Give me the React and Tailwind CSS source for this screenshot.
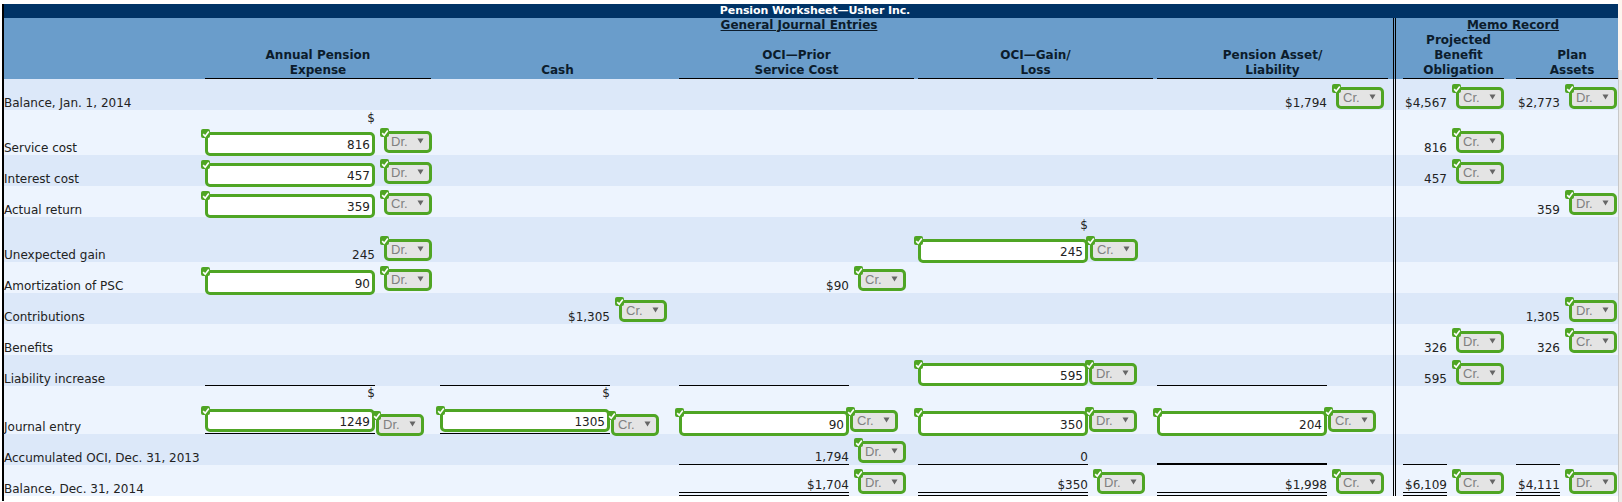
import React from "react";

function Check() {
  return (
    <span className="absolute left-[-7px] top-[-6px] w-[9px] h-[9px] rounded-[2px] bg-[#4fa524] flex items-center justify-center">
      <svg viewBox="0 0 10 10" className="w-[8px] h-[8px]">
        <path d="M1.5 5.2 L4 7.8 L8.5 2" stroke="#fff" strokeWidth="2" fill="none" />
      </svg>
    </span>
  );
}

function Sel({ v, cls = "ml-[9px] mb-[2px]" }) {
  return (
    <span className={"relative shrink-0 w-[48px] h-[22px] bg-[#e4e4e4] border-[3px] border-[#4fa524] rounded-[5px] flex items-center justify-between pl-[4px] pr-[5px] font-['Liberation_Sans'] text-[13px] tracking-normal text-[#808080] " + cls}>
      <Check />
      <span className="-mt-[1px]">{v}</span>
      <svg viewBox="0 0 7 6" className="w-[7px] h-[6px] -mt-[3px]">
        <path d="M0.5 0.5 H6.5 L3.5 5.5 Z" fill="#666" />
      </svg>
    </span>
  );
}

function Inp({ v, cls = "h-[24px] mb-[-1px]" }) {
  return (
    <span className={"relative shrink-0 w-[170px] bg-white border-[3px] border-[#4fa524] rounded-[5px] flex items-center justify-end pr-[2px] pt-[2px] " + cls}>
      <Check />
      {v}
    </span>
  );
}

function Dollar({ cls = "mb-[7px]" }) {
  return <span className={"block w-[170px] text-right leading-[14px] h-[14px] " + cls}>$</span>;
}

function Amt({ v, w = "w-[170px]" }) {
  return <span className={"shrink-0 text-right " + w}>{v}</span>;
}

function Rule({ v = "", w = "w-[170px]", kind = "border-b border-black" }) {
  return <div className={"shrink-0 text-right " + w + " " + kind}>{v}</div>;
}

const DBL = "border-b-[4px] border-double border-black";

const W = ["w-[235px]", "w-[239px]", "w-[239px]", "w-[239px]", "w-[236px]"];

function Row({ label, h, alt, cells = {} }) {
  return (
    <div className={"flex " + h + " " + (alt ? "bg-[#dce8f9]" : "bg-[#edf4fe]")}>
      <div className="w-[201px] shrink-0 flex items-end whitespace-nowrap">{label}</div>
      {W.map((w, i) => (
        <div key={i} className={"flex items-end shrink-0 h-full " + w}>{cells[i]}</div>
      ))}
      <div className="w-[3px] shrink-0 border-x border-black" />
      <div className="w-[120px] shrink-0 flex items-end h-full pl-[7px]">{cells[5]}</div>
      <div className="w-[102px] shrink-0 flex items-end h-full">{cells[6]}</div>
    </div>
  );
}

function F({ children }) {
  return <>{children}</>;
}

function Memo({ v, sel, mb = "mb-[2px]" }) {
  return (
    <F>
      <Amt v={v} w="w-[44px]" />
      <Sel v={sel} cls={"ml-[9px] " + mb} />
    </F>
  );
}

function Head({ w, children, cls = "" }) {
  return (
    <div className={"shrink-0 flex items-end h-full " + cls}>
      <div className={"text-center leading-[15px] border-b border-black " + w}>{children}</div>
    </div>
  );
}

export default function App() {
  const rows = [
    { label: "Balance, Jan. 1, 2014", h: "h-[31px]", alt: true, cells: {
      4: <F><Amt v="$1,794" /><Sel v="Cr." cls="ml-[9px] mb-[1px]" /></F>,
      5: <Memo v="$4,567" sel="Cr." mb="mb-[1px]" />,
      6: <Memo v="$2,773" sel="Dr." mb="mb-[1px]" />,
    }},
    { label: "Service cost", h: "h-[45px]", cells: {
      0: <F><div className="flex flex-col"><Dollar /><Inp v="816" /></div><Sel v="Dr." /></F>,
      5: <Memo v="816" sel="Cr." />,
    }},
    { label: "Interest cost", h: "h-[31px]", alt: true, cells: {
      0: <F><Inp v="457" /><Sel v="Dr." /></F>,
      5: <Memo v="457" sel="Cr." />,
    }},
    { label: "Actual return", h: "h-[31px]", cells: {
      0: <F><Inp v="359" /><Sel v="Cr." /></F>,
      6: <Memo v="359" sel="Dr." />,
    }},
    { label: "Unexpected gain", h: "h-[45px]", alt: true, cells: {
      0: <F><Amt v="245" /><Sel v="Dr." cls="ml-[9px] mb-[1px]" /></F>,
      3: <F><div className="flex flex-col"><Dollar /><Inp v="245" /></div><Sel v="Cr." cls="ml-[2px] mb-[1px]" /></F>,
    }},
    { label: "Amortization of PSC", h: "h-[31px]", cells: {
      0: <F><Inp v="90" cls="h-[25px] mb-[-2px]" /><Sel v="Dr." /></F>,
      2: <F><Amt v="$90" /><Sel v="Cr." /></F>,
    }},
    { label: "Contributions", h: "h-[31px]", alt: true, cells: {
      1: <F><Amt v="$1,305" /><Sel v="Cr." /></F>,
      6: <Memo v="1,305" sel="Dr." />,
    }},
    { label: "Benefits", h: "h-[31px]", cells: {
      5: <Memo v="326" sel="Dr." />,
      6: <Memo v="326" sel="Cr." />,
    }},
    { label: "Liability increase", h: "h-[31px]", alt: true, cells: {
      0: <Rule />,
      1: <Rule />,
      2: <Rule />,
      3: <F><Inp v="595" cls="h-[23px] mb-0" /><Sel v="Dr." cls="ml-[1px] mb-[1px]" /></F>,
      4: <Rule />,
      5: <Memo v="595" sel="Cr." mb="mb-[1px]" />,
    }},
    { label: "Journal entry", h: "h-[48px]", cells: {
      0: <F><div className="flex flex-col"><Dollar cls="mb-[9px]" /><div className="border-b border-black"><Inp v="1249" cls="h-[23px] mb-[1px]" /></div></div><Sel v="Dr." cls="ml-[1px] mb-[-2px]" /></F>,
      1: <F><div className="flex flex-col"><Dollar cls="mb-[9px]" /><div className="border-b border-black"><Inp v="1305" cls="h-[23px] mb-[1px]" /></div></div><Sel v="Cr." cls="ml-[1px] mb-[-2px]" /></F>,
      2: <F><Inp v="90" cls="h-[25px] mb-[-2px]" /><Sel v="Cr." cls="ml-[1px] mb-[2px]" /></F>,
      3: <F><Inp v="350" cls="h-[25px] mb-[-2px]" /><Sel v="Dr." cls="ml-[1px] mb-[2px]" /></F>,
      4: <F><Inp v="204" cls="h-[25px] mb-[-2px]" /><Sel v="Cr." cls="ml-[1px] mb-[2px]" /></F>,
    }},
    { label: "Accumulated OCI, Dec. 31, 2013", h: "h-[31px]", alt: true, cells: {
      2: <F><Rule v="1,794" /><Sel v="Dr." /></F>,
      3: <Rule v="0" />,
      4: <Rule kind="border-b-2 border-black" />,
      5: <Rule w="w-[44px]" />,
      6: <Rule w="w-[44px]" />,
    }},
    { label: "Balance, Dec. 31, 2014", h: "h-[31px]", cells: {
      2: <F><Rule v="$1,704" kind={DBL} /><Sel v="Dr." /></F>,
      3: <F><Rule v="$350" kind={DBL} /><Sel v="Dr." /></F>,
      4: <F><Rule v="$1,998" kind={DBL} /><Sel v="Cr." /></F>,
      5: <F><Rule v="$6,109" w="w-[44px]" kind={DBL} /><Sel v="Cr." /></F>,
      6: <F><Rule v="$4,111" w="w-[44px]" kind={DBL} /><Sel v="Dr." /></F>,
    }},
  ];

  return (
    <div className="font-['DejaVu_Sans'] w-[1622px] h-[502px] bg-white text-[12px] leading-[14px] text-[#222] overflow-hidden flex">
      <div className="w-[1618px] shrink-0 pt-[4px] pl-[2px]">
        <div className="border-l-2 border-black w-[1616px] h-[497px]">
          <div className="h-[14px] bg-[#003366] text-white font-bold text-[11px] leading-[14px] tracking-[-0.1px] text-center pl-[8px] whitespace-nowrap">
            Pension Worksheet—Usher Inc.
          </div>
          <div className="flex h-[61px] bg-[#6a9dcb] font-bold tracking-normal text-[#0c1c2c]">
            <div className="w-[201px] shrink-0" />
            <div className="w-[1188px] shrink-0 flex flex-col">
              <div className="text-center underline leading-[14px]">General Journal Entries</div>
              <div className="flex flex-1">
                <Head w="w-[226px]" cls="w-[235px]">Annual Pension<br />Expense</Head>
                <div className="w-[239px] shrink-0 flex items-end h-full">
                  <div className="w-[235px] text-center leading-[15px] pb-[1px]">Cash</div>
                </div>
                <Head w="w-[235px]" cls="w-[239px]">OCI—Prior<br />Service Cost</Head>
                <Head w="w-[235px]" cls="w-[239px]">OCI—Gain/<br />Loss</Head>
                <Head w="w-[231px]" cls="w-[236px]">Pension Asset/<br />Liability</Head>
              </div>
            </div>
            <div className="w-[3px] shrink-0 border-x border-black" />
            <div className="w-[222px] shrink-0 flex flex-col">
              <div className="text-center underline leading-[14px] pl-[12px]">Memo Record</div>
              <div className="flex flex-1 items-end">
                <div className="ml-[7px] w-[101px] text-center leading-[15px] pl-[10px] border-b border-black">Projected<br />Benefit<br />Obligation</div>
                <div className="ml-[12px] w-[102px] text-center leading-[15px] pl-[10px] border-b border-black">Plan<br />Assets</div>
              </div>
            </div>
          </div>
          {rows.map((r) => (
            <Row key={r.label} label={r.label} h={r.h} alt={r.alt} cells={r.cells} />
          ))}
        </div>
      </div>
      <div className="flex-1 flex flex-col">
        <div className="h-[70px] bg-[#fdf5ef]" />
        <div className="flex-1 bg-[#eceae8] border-l border-[#c8c8c8]" />
      </div>
    </div>
  );
}
